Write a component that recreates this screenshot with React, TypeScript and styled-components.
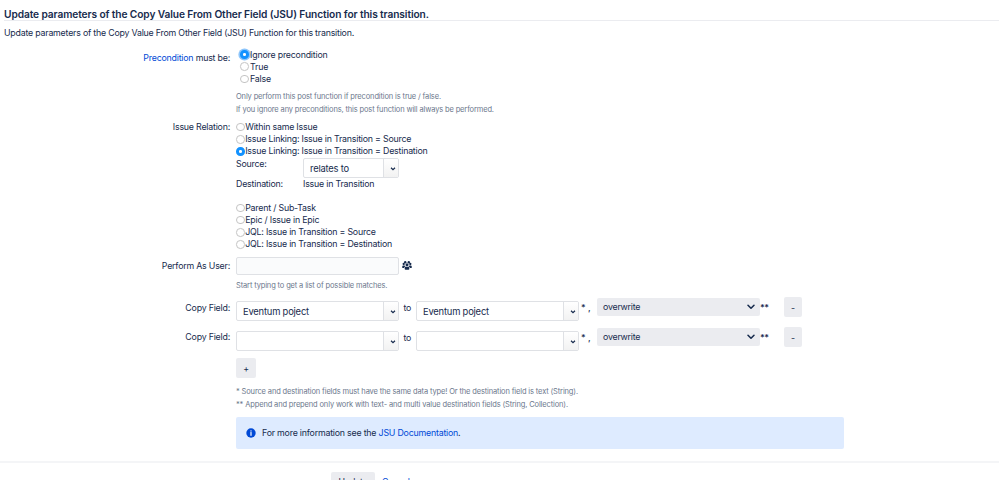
import React from 'react';
import styled, {createGlobalStyle} from "styled-components";

const theme = {
    text: "#172b4d",
    muted: "#6b778c",
    link: "#0049d6",
    border: "#dfe1e5",
    button: "#ebecf0",
}

type RadioItem = { label: string, checked?: boolean }

const issueRelations: RadioItem[] = [
    {label: "Within same Issue"},
    {label: "Issue Linking: Issue in Transition = Source"},
    {label: "Issue Linking: Issue in Transition = Destination", checked: true},
]

const otherRelations: RadioItem[] = [
    {label: "Parent / Sub-Task"},
    {label: "Epic / Issue in Epic"},
    {label: "JQL: Issue in Transition = Source"},
    {label: "JQL: Issue in Transition = Destination"},
]

const RadioList = ({items}: { items: RadioItem[] }) => (
    <>
        {items.map(item => (
            <RadioRow key={item.label}>
                <Radio $checked={item.checked}/>
                <span>{item.label}</span>
            </RadioRow>
        ))}
    </>
);

const Combo = ({value, width}: { value?: string, width: number }) => (
    <StyledCombo $width={width}>
        <ComboValue>{value}</ComboValue>
        <ComboButton>
            <svg width="6" height="4" viewBox="0 0 6 4" fill="none">
                <path d="M1 0.8L3 2.7L5 0.8" stroke={theme.text} strokeWidth="1.2"/>
            </svg>
        </ComboButton>
    </StyledCombo>
);

const CopyRow = ({value, first}: { value?: string, first?: boolean }) => (
    <Field $height={30}>
        <Label $top={first ? 5 : 4}>Copy Field:</Label>
        <CopyControls>
            <Combo value={value} width={163}/>
            <To>to</To>
            <Combo value={value} width={163}/>
            <Star>* ,</Star>
            <Mode>
                <span>overwrite</span>
                <svg width="8" height="6" viewBox="0 0 8 6" fill="none">
                    <path d="M1 1.2L4 4.3L7 1.2" stroke={theme.text} strokeWidth="1.5" strokeLinecap="round" strokeLinejoin="round"/>
                </svg>
            </Mode>
            <DoubleStar>**</DoubleStar>
            <SmallButton $width={18}>-</SmallButton>
        </CopyControls>
    </Field>
);

const UsersIcon = () => (
    <svg width="10" height="9" viewBox="0 0 20 18" fill={theme.text}>
        <circle cx="3.4" cy="6" r="2.3"/>
        <circle cx="16.6" cy="6" r="2.3"/>
        <circle cx="6.4" cy="2.6" r="2.4"/>
        <circle cx="13.6" cy="2.6" r="2.4"/>
        <circle cx="10" cy="7.6" r="3"/>
        <path d="M0.5 13V11Q0.5 9 2.6 9H5.2Q6 10.4 7 11Q4.4 11.6 4.2 14H1.5Q0.5 14 0.5 13Z"/>
        <path d="M19.5 13V11Q19.5 9 17.4 9H14.8Q14 10.4 13 11Q15.6 11.6 15.8 14H18.5Q19.5 14 19.5 13Z"/>
        <path d="M5.4 16V14Q5.4 11.6 8 11.6H12Q14.6 11.6 14.6 14V16Q14.6 17.5 13 17.5H7Q5.4 17.5 5.4 16Z"/>
    </svg>
);

const App = () => {
    return (
        <>
            <GlobalStyle/>
            <Page>
                <Title>Update parameters of the Copy Value From Other Field (JSU) Function for this transition.</Title>
                <Intro>Update parameters of the Copy Value From Other Field (JSU) Function for this transition.</Intro>

                <Field $height={72.5}>
                    <Label $top={3}><Link>Precondition</Link> must be:</Label>
                    <div>
                        <RadioRow $indent>
                            <Radio $checked $focused/>
                            <span>Ignore precondition</span>
                        </RadioRow>
                        <RadioRow $indent><Radio/><span>True</span></RadioRow>
                        <RadioRow $indent><Radio/><span>False</span></RadioRow>
                        <Description $top={4.7}>
                            Only perform this post function if precondition is true / false.<br/>
                            If you ignore any preconditions, this post function will always be performed.
                        </Description>
                    </div>
                </Field>

                <Field $height={135.5}>
                    <Label>Issue Relation:</Label>
                    <div>
                        <RadioList items={issueRelations}/>
                        <Relation>
                            <span>Source:</span>
                            <Combo value="relates to" width={96}/>
                            <span>Destination:</span>
                            <span>Issue in Transition</span>
                        </Relation>
                        <RadioList items={otherRelations}/>
                    </div>
                </Field>

                <Field $height={40.5}>
                    <Label $top={3}>Perform As User:</Label>
                    <div>
                        <UserRow>
                            <UserInput/>
                            <UsersIcon/>
                        </UserRow>
                        <Description $top={4}>Start typing to get a list of possible matches.</Description>
                    </div>
                </Field>

                <CopyRow value="Eventum poject" first/>
                <CopyRow/>

                <Footnotes>
                    <SmallButton $width={20}>+</SmallButton>
                    <Description $top={7}>
                        * Source and destination fields must have the same data type! Or the destination field is text (String).<br/>
                        ** Append and prepend only work with text- and multi value destination fields (String, Collection).
                    </Description>
                    <Info>
                        <svg width="10" height="10" viewBox="0 0 10 10">
                            <circle cx="5" cy="5" r="4.7" fill={theme.link}/>
                            <circle cx="5" cy="2.9" r="0.7" fill="#fff"/>
                            <path d="M5 4.5V7.3" stroke="#fff" strokeWidth="1.2" strokeLinecap="round"/>
                        </svg>
                        <span>For more information see the <Link>JSU Documentation</Link>.</span>
                    </Info>
                </Footnotes>

                <Actions>
                    <UpdateButton>Update</UpdateButton>
                    <Link>Cancel</Link>
                </Actions>
            </Page>
        </>
    );
};

export default App;

const GlobalStyle = createGlobalStyle`
    * {
        box-sizing: border-box;
    }

    body {
        margin: 0;
        background-color: #fff;
        overflow: hidden;
    }
`

const Page = styled.main`
    height: 480px;
    overflow: hidden;
    color: ${theme.text};
    font-family: Inter, "Liberation Sans", sans-serif;
    font-size: 8.8px;
    letter-spacing: -0.2px;
    line-height: 12.2px;
    white-space: nowrap;
`

const Title = styled.h1`
    height: 21px;
    margin: 0 0 0 4px;
    padding-top: 8px;
    border-bottom: 1px solid #ebecf0;
    font-size: 10.2px;
    font-weight: 600;
    letter-spacing: -0.1px;
    line-height: 12px;
`

const Intro = styled.p`
    height: 27.5px;
    margin: 0;
    padding: 6px 0 0 4px;
`

const Field = styled.div<{ $height: number }>`
    display: grid;
    grid-template-columns: 230px 1fr;
    column-gap: 6px;
    height: ${({$height}) => $height}px;
`

const Label = styled.div<{ $top?: number }>`
    padding-top: ${({$top}) => $top || 0}px;
    text-align: right;
`

const Link = styled.a`
    color: ${theme.link};
`

const RadioRow = styled.div<{ $indent?: boolean }>`
    display: flex;
    align-items: center;
    gap: ${({$indent}) => $indent ? 1.5 : 0.3}px;
    height: 12.2px;
    padding-left: ${({$indent}) => $indent ? 4 : 0.3}px;
`

const Radio = styled.span<{ $checked?: boolean, $focused?: boolean }>`
    width: 8.6px;
    height: 8.6px;
    border: ${({$checked}) => $checked ? "3px solid #1292ff" : "1px solid #c4c4c4"};
    border-radius: 50%;
    background-color: #fff;
    box-shadow: ${({$focused}) => $focused ? "0 0 0 1.6px #8cc5fb" : "none"};
`

const Description = styled.div<{ $top: number }>`
    padding-top: ${({$top}) => $top}px;
    color: ${theme.muted};
    font-size: 7.5px;
    letter-spacing: -0.14px;
    line-height: 13px;
`

const StyledCombo = styled.div<{ $width: number }>`
    display: flex;
    width: ${({$width}) => $width}px;
    height: 20px;
    border: 1px solid ${theme.border};
    border-radius: 2px;
    background-color: #fff;
    overflow: hidden;
`

const Relation = styled.div`
    display: grid;
    grid-template-columns: 67px auto;
    grid-template-rows: 20px 24.2px;
    justify-content: start;
`

const ComboValue = styled.div`
    flex: 1;
    padding-left: 6px;
    font-size: 9.4px;
    letter-spacing: -0.2px;
    line-height: 19px;
`

const ComboButton = styled.div`
    display: flex;
    align-items: center;
    justify-content: center;
    width: 15px;
    padding: 2px 0 0 3px;
    border-left: 1px solid ${theme.border};
    background: linear-gradient(#fff, #f2f2f2);
`

const UserRow = styled.div`
    display: flex;
    align-items: center;
    gap: 3px;
`

const UserInput = styled.input`
    width: 163px;
    height: 18px;
    padding: 0;
    border: 1px solid ${theme.border};
    border-radius: 2px;
    background-color: #fafbfc;
`

const CopyControls = styled.div`
    display: flex;
    align-items: flex-start;

    > ${StyledCombo} {
        margin-top: 4px;
    }
`

const To = styled.span`
    width: 17px;
    padding: 5px 0 0 4.5px;
`

const Star = styled.span`
    width: 18px;
    padding: 5px 0 0 2px;
    font-weight: 500;
    letter-spacing: 0;
`

const Mode = styled.div`
    display: flex;
    align-items: center;
    justify-content: space-between;
    width: 163px;
    height: 18px;
    margin-top: 1px;
    padding: 0 5px 0 6px;
    border-radius: 2px;
    background-color: ${theme.button};

    span {
        padding-top: 1px;
    }
`

const DoubleStar = styled.span`
    width: 24px;
    padding-top: 5px;
    font-weight: 600;
    letter-spacing: -0.6px;
`

const SmallButton = styled.div<{ $width: number }>`
    width: ${({$width}) => $width}px;
    height: 20px;
    border-radius: 2px;
    background-color: ${theme.button};
    line-height: 21px;
    text-align: center;
`

const Footnotes = styled.div`
    height: 104px;
    padding: 0.5px 0 0 236px;
`

const Info = styled.div`
    display: flex;
    align-items: center;
    gap: 6px;
    width: 608px;
    height: 32px;
    margin-top: 6.5px;
    padding-left: 10px;
    border-radius: 2px;
    background-color: #deebff;

    > span {
        padding-top: 1px;
    }
`

const Actions = styled.div`
    display: flex;
    gap: 7px;
    padding: 9px 0 0 331px;
    border-top: 2px solid #f4f5f7;
    line-height: 20px;
`

const UpdateButton = styled.div`
    width: 44px;
    height: 20px;
    border-radius: 2px;
    background-color: ${theme.button};
    text-align: center;
`
